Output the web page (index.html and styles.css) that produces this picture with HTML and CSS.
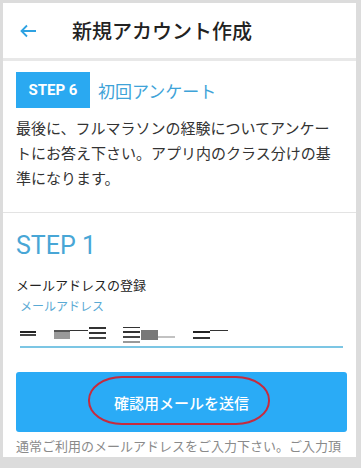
FILE: index.html
```html
<!DOCTYPE html>
<html lang="ja">
<head>
  <meta charset="UTF-8">
  <meta name="viewport" content="width=device-width, initial-scale=1.0">
  <title>新規アカウント作成</title>
  <link rel="stylesheet" href="styles.css">
</head>
<body>
  <div class="screen">
    <!-- ヘッダー -->
    <div class="header">
      <svg class="back" width="18" height="14" viewBox="0 0 18 14">
        <path d="M17 7H2.5 M8 1.5L2.5 7L8 12.5" fill="none" stroke="#2ea2e2" stroke-width="1.8"/>
      </svg>
      <div class="title">新規アカウント作成</div>
    </div>

    <!-- STEP 6 説明 -->
    <div class="section intro">
      <div class="step-head">
        <span class="badge">STEP 6</span>
        <span class="step-name">初回アンケート</span>
      </div>
      <p class="lead">最後に、フルマラソンの経験についてアンケートにお答え下さい。アプリ内のクラス分けの基準になります。</p>
    </div>

    <!-- STEP 1 メール登録 -->
    <div class="section form">
      <div class="step-title">STEP 1</div>
      <div class="field-title">メールアドレスの登録</div>
      <div class="field-label">メールアドレス</div>
      <div class="input">
        <svg class="masked" width="210" height="18" viewBox="0 0 210 18">
          <rect x="0" y="5" width="16" height="2" fill="#222"/>
          <rect x="0" y="8" width="16" height="2" fill="#444"/>
          <rect x="34" y="4" width="16" height="9" fill="#9a9a9a"/>
          <rect x="34" y="4" width="16" height="2" fill="#555"/>
          <rect x="50" y="4" width="18" height="1" fill="#333"/>
          <rect x="69" y="1" width="17" height="2" fill="#333"/>
          <rect x="69" y="6" width="17" height="2" fill="#333"/>
          <rect x="69" y="11" width="17" height="2" fill="#444"/>
          <rect x="103" y="1" width="17" height="1" fill="#333"/>
          <rect x="103" y="5" width="17" height="2" fill="#333"/>
          <rect x="103" y="10" width="17" height="2" fill="#444"/>
          <rect x="103" y="15" width="17" height="2" fill="#999"/>
          <rect x="121" y="4" width="17" height="10" fill="#787878"/>
          <rect x="138" y="10" width="17" height="2" fill="#c2c2c2"/>
          <rect x="173" y="5" width="17" height="2" fill="#222"/>
          <rect x="173" y="11" width="17" height="2" fill="#333"/>
          <rect x="190" y="4" width="18" height="1" fill="#333"/>
        </svg>
      </div>
      <div class="send-btn">
        確認用メールを送信
        <span class="mark"></span>
      </div>
      <p class="note">通常ご利用のメールアドレスをご入力下さい。ご入力頂</p>
    </div>
  </div>
</body>
</html>
```

FILE: styles.css
```css
body {
  margin: 0;
  background: #dcdcdc;
  font-family: "Noto Sans CJK JP", "Noto Sans", sans-serif;
}

.screen {
  margin: 3px 5px 0 3px;
  height: 454px;
  background: #fff;
  overflow: hidden;
}

/* ヘッダー */
.header {
  display: flex;
  align-items: center;
  height: 55px;
  padding-left: 16px;
  border-bottom: 3px solid #e8e8e8;
}
.header .back {
  display: block;
  flex: none;
}
.header .title {
  margin-left: 35px;
  font-size: 20px;
  font-weight: 500;
  color: #222;
}

.section {
  padding: 0 9px 0 13px;
}

/* STEP 6 */
.intro {
  padding-top: 11px;
  padding-bottom: 22px;
  border-bottom: 1px solid #e3e3e3;
}
.step-head {
  display: flex;
  align-items: center;
  gap: 8px;
}
.badge {
  display: inline-flex;
  align-items: center;
  justify-content: center;
  width: 74px;
  height: 36px;
  background: #2aa9f1;
  color: #fff;
  font-family: Roboto, "Noto Sans", sans-serif;
  font-weight: 700;
  font-size: 15px;
}
.step-name {
  font-size: 17px;
  color: #3ea3d8;
}
.lead {
  margin: 7px 4px 0 0;
  font-size: 15px;
  line-height: 25px;
  color: #333;
}

/* STEP 1 */
.form {
  padding-top: 18px;
}
.step-title {
  font-family: Roboto, "Noto Sans", sans-serif;
  font-size: 25px;
  line-height: 30px;
  color: #48a6d6;
}
.field-title {
  margin-top: 14px;
  font-size: 13px;
  line-height: 20px;
  color: #222;
}
.field-label {
  margin: 3px 0 0 4px;
  font-size: 12px;
  line-height: 16px;
  color: #5aaad4;
}
.input {
  margin: 0 4px;
  height: 20px;
  padding-top: 12px;
  border-bottom: 2px solid #7cc6e4;
}
.input .masked {
  display: block;
}

.send-btn {
  position: relative;
  display: flex;
  align-items: center;
  justify-content: center;
  margin-top: 24px;
  height: 60px;
  border-radius: 3px;
  background: #2aabf6;
  color: #fff;
  font-size: 15px;
  font-weight: 500;
}
/* 赤丸の注記 */
.send-btn .mark {
  position: absolute;
  left: 72px;
  top: 4px;
  width: 178px;
  height: 45px;
  border: 2px solid #c62b3e;
  border-radius: 34px / 24px;
}

.note {
  margin: 4px 0 0;
  font-size: 13px;
  line-height: 20px;
  color: #8a8a8a;
  white-space: nowrap;
}
```
